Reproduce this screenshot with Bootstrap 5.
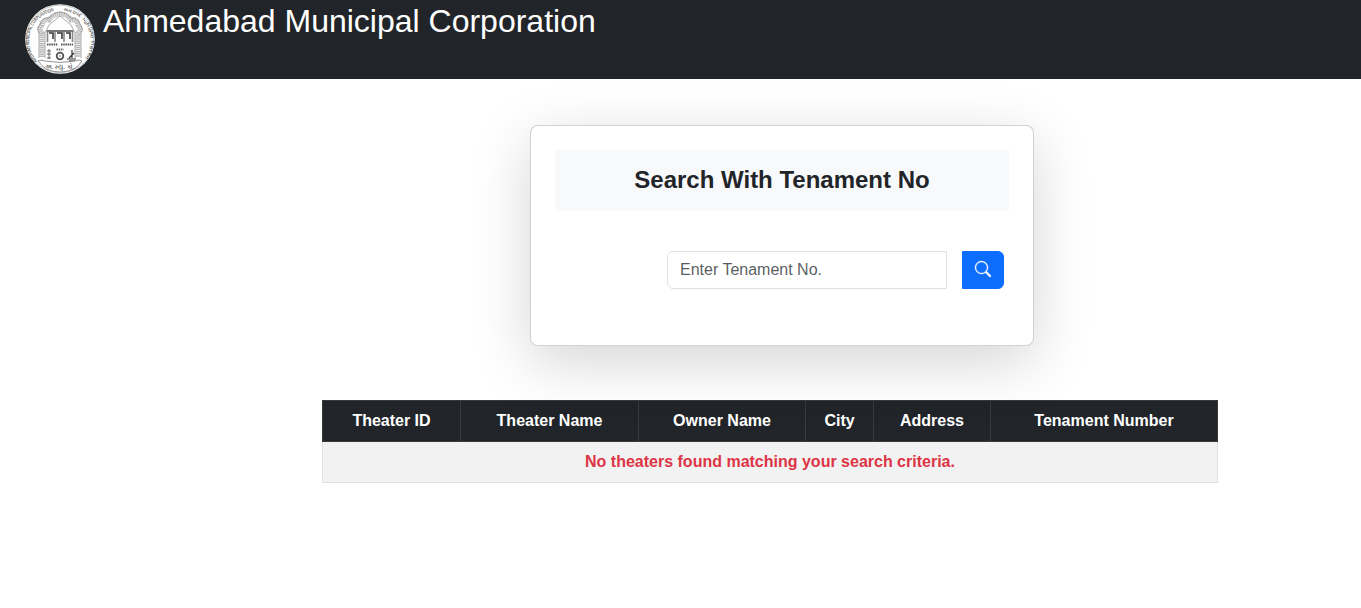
<!DOCTYPE html>
<html lang="en">
<head>
<meta charset="utf-8">
<meta name="viewport" content="width=device-width, initial-scale=1">
<title>Ahmedabad Municipal Corporation</title>
<link href="https://cdn.jsdelivr.net/npm/bootstrap@5.3.0/dist/css/bootstrap.min.css" rel="stylesheet">
<style>
  body { font-family: "Liberation Sans", Arial, sans-serif; }
  .site-bar { height: 79px; padding: 4px 25px; }
  .site-title { font-size: 32px; line-height: 35px; margin-left: 8px; }
  .search-card { width: 504px; height: 221px; margin: 46px 0 0 530px; border-radius: 8px; box-shadow: 0 16px 58px rgba(0, 0, 0, .17); }
  .search-heading { font-size: 24px; line-height: 28.8px; }
  .search-row { width: 337px; margin: 40px 5px 0 auto; gap: 16px; }
  .search-row svg { display: block; margin-top: -1px; }
  .theater-table { width: 896px; margin: 54px 0 0 322px; table-layout: fixed; }
</style>
</head>
<body>
<nav class="site-bar bg-dark text-white d-flex align-items-start">
  <svg width="70" height="70" viewBox="0 0 70 70" role="img" aria-label="Corporation seal">
    <defs>
      <path id="arcLeft" d="M12.500 57A29.500 29.500 0 0 1 32 7"/>
      <path id="arcRight" d="M38 7A29.500 29.500 0 0 1 57.500 57"/>
    </defs>
    <circle cx="35" cy="35" r="34.8" fill="#fff"/>
    <circle cx="35" cy="35" r="33.8" fill="none" stroke="#aaa" stroke-width=".7"/>
    <g font-size="5" fill="#222" font-family="Liberation Sans, sans-serif">
      <text><textPath href="#arcLeft" textLength="64" lengthAdjust="spacingAndGlyphs">AMDAVAD MUNICIPAL CORPORATION</textPath></text>
      <text><textPath href="#arcRight" textLength="64" lengthAdjust="spacingAndGlyphs">અમદાવાદ મ્યુનિસિપલ કોર્પોરેશન</textPath></text>
    </g>
    <path d="M17 53V29Q13 25 17 21Q18 15 24 16Q28 10 35 10Q42 10 46 16Q52 15 53 21Q57 25 53 29v24" fill="none" stroke="#bbb" stroke-width="5" stroke-dasharray="1.500 .6"/>
    <path d="M14 54V29Q11 25 15 20Q17 13 24 14Q29 8 35 8Q41 8 46 14Q53 13 55 20Q59 25 56 29v25M20 54V29l4-8 11-9 11 9 4 8v25" fill="none" stroke="#888" stroke-width=".7"/>
    <path d="M21.500 27h27" stroke="#666" stroke-width="1.800"/>
    <path d="M22.500 28v10M30 28v10M39 28v10M47.500 28v10" stroke="#888" stroke-width="1.600"/>
    <path d="M24 29h4v6M32 29h5v6M41 29h4v6" fill="none" stroke="#333" stroke-width="1.500"/>
    <path d="M22 40.500h11M36 40.500h12" stroke="#555" stroke-width="2" stroke-dasharray="1.500 .7"/>
    <path d="M31.500 45.500h7" stroke="#666" stroke-width="2" stroke-dasharray="1.500 .7"/>
    <circle cx="35" cy="52" r="3.300" fill="none" stroke="#555" stroke-width="1.800"/>
    <circle cx="35" cy="52" r=".8" fill="#666"/>
    <path d="M24 45v10M22 47h4M22 50h4M22 54h4" stroke="#666" fill="none"/>
    <path d="M47 46v8M49 49l-5 5M42 55h9M44 57h6" stroke="#333" stroke-width="1.200" fill="none"/>
    <path d="M13 57Q16 55 20 57Q35 60 50 57Q54 55 57 57Q53 63 49 65Q35 71 21 65Q17 62 13 57Z" fill="#fff" stroke="#777" stroke-width=".8"/>
    <text x="35" y="65" text-anchor="middle" font-size="7" fill="#222" textLength="30" lengthAdjust="spacingAndGlyphs">અ. મ્યુ. કો.</text>
  </svg>
  <span class="site-title">Ahmedabad Municipal Corporation</span>
</nav>
<main>
  <div class="card search-card p-4">
    <h4 class="search-heading bg-light text-center fw-bold p-3 mb-0">Search With Tenament No</h4>
    <form class="input-group search-row flex-nowrap">
      <input type="text" class="form-control" placeholder="Enter Tenament No." aria-label="Tenament number">
      <button class="btn btn-primary" type="button" aria-label="Search">
        <svg width="16" height="16" fill="currentColor" stroke="currentColor" stroke-width=".3" overflow="visible" viewBox="0 0 16 16"><path d="M11.742 10.344a6.500 6.500 0 1 0-1.397 1.398h-.001c.03.04.062.078.098.115l3.850 3.850a1 1 0 0 0 1.415-1.414l-3.850-3.850a1.007 1.007 0 0 0-.115-.1zM12 6.500a5.500 5.500 0 1 1-11 0 5.500 5.500 0 0 1 11 0z"/></svg>
      </button>
    </form>
  </div>
  <table class="table table-bordered table-striped text-center theater-table">
    <colgroup><col style="width:138px"><col style="width:178px"><col style="width:167px"><col style="width:68px"><col style="width:117px"><col style="width:227px"></colgroup>
    <thead class="table-dark">
      <tr><th>Theater ID</th><th>Theater Name</th><th>Owner Name</th><th>City</th><th>Address</th><th>Tenament Number</th></tr>
    </thead>
    <tbody>
      <tr><td colspan="6" class="text-danger fw-bold">No theaters found matching your search criteria.</td></tr>
    </tbody>
  </table>
</main>
<script src="https://cdn.jsdelivr.net/npm/bootstrap@5.3.0/dist/js/bootstrap.bundle.min.js"></script>
</body>
</html>
